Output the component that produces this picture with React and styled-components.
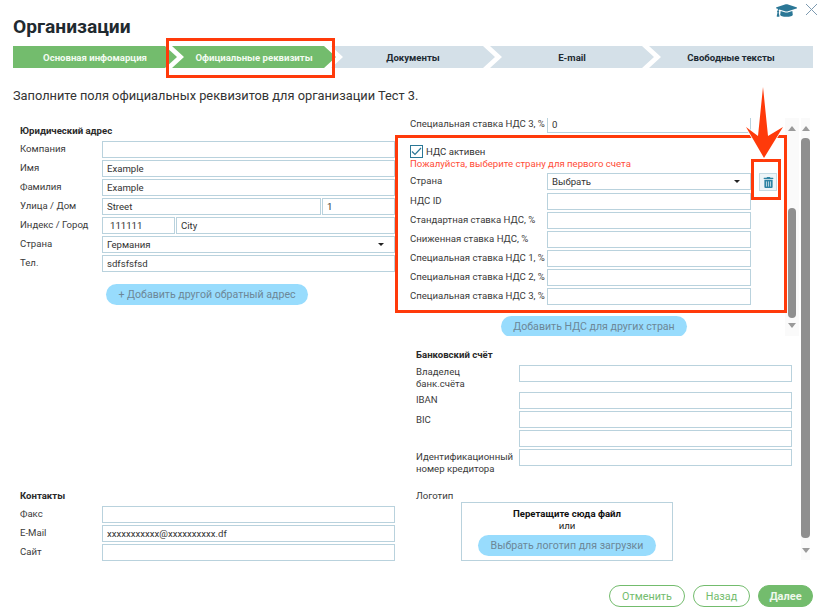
import React from "react";
import styled, { createGlobalStyle } from "styled-components";
import { FaGraduationCap, FaTrashAlt } from "react-icons/fa";

const Global = createGlobalStyle`
  html, body { margin: 0; padding: 0; background: #fff; }
  body { font-family: Roboto, "Liberation Sans", sans-serif; color: #333; overflow: hidden; }
  * { box-sizing: border-box; }
`;

const Page = styled.div`
  position: relative;
  width: 819px;
  height: 608px;
  display: flex;
  flex-direction: column;
  overflow: hidden;
`;
const Header = styled.header`
  height: 46px;
  display: flex;
  justify-content: space-between;
  align-items: flex-start;
  padding-left: 13px;
`;
const Title = styled.h1`
  margin: 15px 0 0;
  font-size: 19.2px;
  line-height: 24px;
  font-weight: 700;
  color: #1f2a30;
`;
const TopIcons = styled.div`
  display: flex;
  align-items: flex-start;
  color: #2b7796;
  gap: 8px;
  padding-right: 1px;
  height: 18px;
`;
const Stepper = styled.nav`
  display: flex;
  margin-left: 13px;
  width: 800px;
  height: 22px;
`;
const Step = styled.div`
  flex: 0 0 164px;
  margin-left: ${(p) => (p.$first ? 0 : -5)}px;
  display: flex;
  align-items: center;
  justify-content: center;
  font-size: 9.6px;
  font-weight: 700;
  background: ${(p) => (p.$done ? "#73bc6d" : "#d4e0e8")};
  color: ${(p) => (p.$done ? "#f4fbf2" : "#1d2a33")};
  clip-path: polygon(
    0 0,
    ${(p) => (p.$last ? "100% 0" : "calc(100% - 12px) 0")},
    100% 50%,
    ${(p) => (p.$last ? "100% 100%" : "calc(100% - 12px) 100%")},
    0 100%,
    ${(p) => (p.$first ? "0 50%" : "12px 50%")}
  );
`;
const Intro = styled.p`
  margin: 20px 0 0 13px;
  font-size: 12.8px;
  line-height: 16px;
  color: #333;
`;
const Body = styled.main`
  margin-top: 14px;
  height: 445px;
  display: flex;
  padding-left: 20px;
`;
const LeftCol = styled.section`
  width: 375px;
  display: flex;
  flex-direction: column;
  padding-bottom: 2px;
`;
const RightCol = styled.section`
  width: 390px;
  margin-left: 15px;
  display: flex;
  flex-direction: column;
  padding-bottom: 2px;
`;
const Heading = styled.h3`
  margin: ${(p) => p.$top || 0}px 0 4px ${(p) => p.$left || 0}px;
  font-size: 9.6px;
  line-height: 12px;
  font-weight: 700;
  color: #2a2a2a;
`;
const Rows = styled.div`
  display: flex;
  flex-direction: column;
  gap: 2px;
`;
const Row = styled.div`
  display: flex;
  min-height: 17px;
  gap: 1px;
`;
const Label = styled.label`
  flex: 0 0 ${(p) => p.$w || 81}px;
  padding-top: ${(p) => p.$pad || 0}px;
  font-size: 9.6px;
  line-height: ${(p) => p.$lh || 16}px;
  color: #3a3a3a;
  white-space: pre;
`;
const Input = styled.input`
  flex: ${(p) => (p.$w ? `0 0 ${p.$w}px` : "1 1 0")};
  min-width: 0;
  height: 17px;
  border: 1.5px solid #b9d2dd;
  background: #fff;
  padding: 0 4px;
  font: 9.6px Roboto, sans-serif;
  color: #333;
  outline: none;
  ${(p) => p.$indent && "padding-left: 7px;"}
`;
const Select = styled.div`
  flex: ${(p) => (p.$w ? `0 0 ${p.$w}px` : "1 1 0")};
  height: 17px;
  border: 1.5px solid #b9d2dd;
  display: flex;
  align-items: center;
  justify-content: space-between;
  padding: 0 10px 0 4px;
  font-size: 9.6px;
  color: #333;
`;
const Caret = styled.i`
  width: 0;
  height: 0;
  border-left: 3px solid transparent;
  border-right: 3px solid transparent;
  border-top: 3px solid #222;
`;
const PillButton = styled.button`
  display: block;
  width: ${(p) => p.$w}px;
  height: 21px;
  margin: ${(p) => p.$margin || 0};
  border: 0;
  border-radius: 11px;
  padding: 0;
  background: #98dcfd;
  color: #6c8797;
  font: 10.6px Roboto, sans-serif;
  white-space: nowrap;
`;
const InnerPanel = styled.div`
  height: 218px;
  display: flex;
`;
const InnerContent = styled.div`
  width: 375px;
  overflow: hidden;
`;
const VatRow = styled(Row)`
  gap: 0;
  align-items: flex-start;
`;
const TopRow = styled(VatRow)`
  margin-top: -2px;
`;
const Check = styled.div`
  margin-top: 12px;
  height: 13px;
  display: flex;
  align-items: center;
  gap: 3px;
  font-size: 9.6px;
  color: #333;
`;
const CheckBox = styled.span`
  width: 13px;
  height: 13px;
  border: 1.5px solid #2b7796;
  display: flex;
  align-items: center;
  justify-content: center;
`;
const ErrorText = styled.div`
  font-size: 9.6px;
  line-height: 12px;
  color: #ff4d38;
  margin-bottom: 3px;
`;
const TrashBtn = styled.button`
  flex: 0 0 18px;
  height: 18px;
  margin-left: 8px;
  padding: 0;
  border: 1.5px solid #c5dbe4;
  background: #eef5f8;
  color: #2f84a3;
  display: flex;
  align-items: center;
  justify-content: center;
`;
const VatRows = styled(Rows)`
  margin-top: 2px;
`;
const Bar = styled.div`
  flex: 0 0 ${(p) => p.$w}px;
  height: ${(p) => p.$h}px;
  background: #fafafa;
  display: flex;
  flex-direction: column;
  align-items: center;
  padding-top: 8px;
`;
const BarUp = styled.i`
  width: 0;
  height: 0;
  border-left: 4.5px solid transparent;
  border-right: 4.5px solid transparent;
  border-bottom: 5px solid #9a9a9a;
`;
const BarDown = styled(BarUp)`
  margin-top: ${(p) => p.$gap}px;
  border-bottom: 0;
  border-top: 5px solid #9a9a9a;
`;
const Thumb = styled.div`
  width: ${(p) => p.$w}px;
  height: ${(p) => p.$h}px;
  margin-top: ${(p) => p.$top}px;
  border-radius: 4px;
  background: #8f8f8f;
`;
const OuterBarWrap = styled.div`
  margin-left: 1px;
`;
const BankRows = styled(Rows)`
  margin-left: 6px;
`;
const ContactBlock = styled.div`
  margin-top: auto;
`;
const LogoBlock = styled.div`
  margin-top: auto;
  margin-left: 6px;
`;
const LogoLabel = styled.div`
  font-size: 9.6px;
  line-height: 12px;
  color: #3a3a3a;
`;
const DropBox = styled.div`
  width: 212px;
  height: 59px;
  margin-left: 45px;
  border: 1.5px solid #b9d2dd;
  padding-top: 5px;
  text-align: center;
  font-size: 9.6px;
  line-height: 12px;
  color: #222;
`;
const DropTitle = styled.div`
  font-weight: 700;
  color: #111;
`;
const Footer = styled.footer`
  margin-top: 22px;
  padding-right: 6px;
  display: flex;
  justify-content: flex-end;
  gap: 8px;
`;
const FootBtn = styled.button`
  width: ${(p) => p.$w}px;
  height: 22px;
  border-radius: 11px;
  border: 1.5px solid #73bc6d;
  padding: 0;
  background: ${(p) => (p.$solid ? "#73bc6d" : "#fff")};
  color: ${(p) => (p.$solid ? "#eef8ec" : "#73bc6d")};
  font: ${(p) => (p.$solid ? "700 11px" : "400 10.8px")} Roboto, sans-serif;
`;
const Callout = styled.div`
  position: absolute;
  left: ${(p) => p.$x}px;
  top: ${(p) => p.$y}px;
  width: ${(p) => p.$w}px;
  height: ${(p) => p.$h}px;
  border: 3px solid #ff3a0a;
  pointer-events: none;
`;
const ArrowSvg = styled.svg`
  position: absolute;
  left: 740px;
  top: 80px;
  pointer-events: none;
`;

const vatLabels = [
  "НДС ID",
  "Стандартная ставка НДС, %",
  "Сниженная ставка НДС, %",
  "Специальная ставка НДС 1, %",
  "Специальная ставка НДС 2, %",
  "Специальная ставка НДС 3, %",
];

export default function App() {
  return (
    <Page>
      <Global />
      <Header>
        <Title>Организации</Title>
        <TopIcons>
          <FaGraduationCap size={21} />
          <svg width="13" height="13" viewBox="0 0 13 13" style={{ marginTop: 3 }}>
            <path d="M1 1L12 12M12 1L1 12" stroke="#7d9ab0" strokeWidth="1" fill="none" />
          </svg>
        </TopIcons>
      </Header>
      <Stepper>
        <Step $done $first>Основная инфомарция</Step>
        <Step $done>Официальные реквизиты</Step>
        <Step>Документы</Step>
        <Step>E-mail</Step>
        <Step $last>Свободные тексты</Step>
      </Stepper>
      <Intro>Заполните поля официальных реквизитов для организации Тест 3.</Intro>
      <Body>
        <LeftCol>
          <Heading $top={7}>Юридический адрес</Heading>
          <Rows>
            <Row><Label>Компания</Label><Input readOnly value="" /></Row>
            <Row><Label>Имя</Label><Input readOnly value="Example" /></Row>
            <Row><Label>Фамилия</Label><Input readOnly value="Example" /></Row>
            <Row><Label>Улица / Дом</Label><Input $w={219} readOnly value="Street" /><Input readOnly value="1" /></Row>
            <Row><Label>Индекс / Город</Label><Input $w={73} $indent readOnly value="111111" /><Input readOnly value="City" /></Row>
            <Row><Label>Страна</Label><Select>Германия<Caret /></Select></Row>
            <Row><Label>Тел.</Label><Input readOnly value="sdfsfsfsd" /></Row>
          </Rows>
          <PillButton $w={202} $margin="12px 0 0 86px">+ Добавить другой обратный адрес</PillButton>
          <ContactBlock>
            <Heading>Контакты</Heading>
            <Rows>
              <Row><Label>Факс</Label><Input readOnly value="" /></Row>
              <Row><Label>E-Mail</Label><Input readOnly value="xxxxxxxxxxx@xxxxxxxxxx.df" /></Row>
              <Row><Label>Сайт</Label><Input readOnly value="" /></Row>
            </Rows>
          </ContactBlock>
        </LeftCol>
        <RightCol>
          <InnerPanel>
            <InnerContent>
              <TopRow><Label $w={137} $lh={15}>Специальная ставка НДС 3, %</Label><Input $w={204} readOnly value="0" /></TopRow>
              <Check>
                <CheckBox>
                  <svg width="11" height="9" viewBox="0 0 11 9">
                    <path d="M1 4.5L4 7.5L10 1" stroke="#2b7796" strokeWidth="1.2" fill="none" />
                  </svg>
                </CheckBox>
                НДС активен
              </Check>
              <ErrorText>Пожалуйста, выберите страну для первого счета</ErrorText>
              <VatRow>
                <Label $w={137} $lh={16}>Страна</Label>
                <Select $w={204}>Выбрать<Caret /></Select>
                <TrashBtn><FaTrashAlt size={11} /></TrashBtn>
              </VatRow>
              <VatRows>
                {vatLabels.map((t) => (
                  <VatRow key={t}><Label $w={137} $lh={15}>{t}</Label><Input $w={204} readOnly value="" /></VatRow>
                ))}
              </VatRows>
              <PillButton $w={186} $margin="11px 0 0 91px">Добавить НДС для других стран</PillButton>
            </InnerContent>
            <Bar $w={14} $h={218}>
              <BarUp />
              <Thumb $w={8} $h={110} $top={77} />
              <BarDown $gap={5} />
            </Bar>
          </InnerPanel>
          <Heading $top={13} $left={6}>Банковский счёт</Heading>
          <BankRows>
            <Row><Label $w={102} $lh={12} $pad={1}>{"Владелец\nбанк.счёта"}</Label><Input $w={273} readOnly value="" /></Row>
            <Row><Label $w={102}>IBAN</Label><Input $w={273} readOnly value="" /></Row>
            <Row><Label $w={102} $pad={1}>BIC</Label><Input $w={273} readOnly value="" /></Row>
            <Row><Label $w={102} /><Input $w={273} readOnly value="" /></Row>
            <Row><Label $w={102} $lh={12} $pad={2}>{"Идентификационный\nномер кредитора"}</Label><Input $w={273} readOnly value="" /></Row>
          </BankRows>
          <LogoBlock>
            <LogoLabel>Логотип</LogoLabel>
            <DropBox>
              <DropTitle>Перетащите сюда файл</DropTitle>
              или
              <PillButton $w={178} $margin="3px auto 0">Выбрать логотип для загрузки</PillButton>
            </DropBox>
          </LogoBlock>
        </RightCol>
        <OuterBarWrap>
          <Bar $w={13} $h={442}>
            <BarUp />
            <Thumb $w={9} $h={400} $top={7} />
            <BarDown $gap={10} />
          </Bar>
        </OuterBarWrap>
      </Body>
      <Footer>
        <FootBtn $w={76}>Отменить</FootBtn>
        <FootBtn $w={57}>Назад</FootBtn>
        <FootBtn $w={55} $solid>Далее</FootBtn>
      </Footer>

      <Callout $x={166} $y={38} $w={169} $h={40} />
      <Callout $x={395} $y={135} $w={392} $h={178} />
      <Callout $x={751} $y={159} $w={30} $h={41} />
      <ArrowSvg width="60" height="85" viewBox="740 80 60 85">
        <polygon
          points="763,87 768,136 783,127 764,158 746,127 758,136"
          fill="#ff3a0a"
          stroke="#fff"
          strokeWidth="1.5"
          paintOrder="stroke"
        />
      </ArrowSvg>
    </Page>
  );
}
